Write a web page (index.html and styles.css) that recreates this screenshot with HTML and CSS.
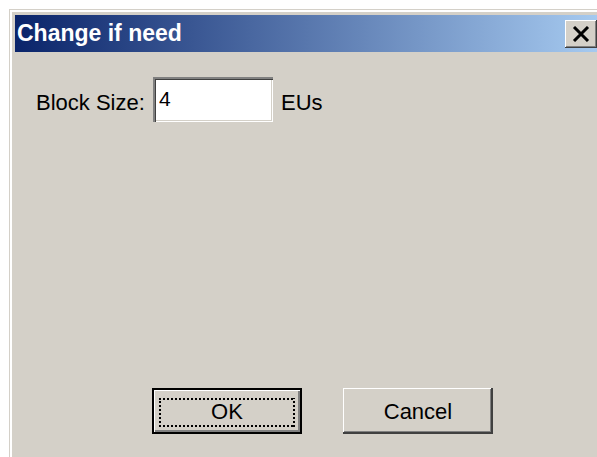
FILE: index.html
```html
<!DOCTYPE html>
<html lang="en">
<head>
<meta charset="utf-8">
<title>Change if need</title>
<link rel="stylesheet" href="styles.css">
</head>
<body>
  <div class="frame">
    <div class="frame-inner">
      <div class="titlebar">
        <span class="title">Change if need</span>
        <button class="close" type="button" aria-label="Close">
          <svg width="18" height="16" viewBox="0 0 18 16"><path d="M2 1 L16 15 M16 1 L2 15" stroke="#000" stroke-width="3" fill="none"/></svg>
        </button>
      </div>
      <div class="client">
        <div class="field-row">
          <label class="label" for="block-size">Block Size:</label>
          <div class="edit"><input id="block-size" class="edit-input" type="text" value="4"></div>
          <span class="unit">EUs</span>
        </div>
        <div class="buttons">
          <button class="btn btn-default" type="button"><span class="focus">OK</span></button>
          <button class="btn" type="button"><span class="nofocus">Cancel</span></button>
        </div>
      </div>
    </div>
  </div>
</body>
</html>
```

FILE: styles.css
```css
html, body {
  margin: 0;
  padding: 0;
  background: #ffffff;
  overflow: hidden;
  width: 597px;
  height: 457px;
}

body {
  padding: 9px 0 0 9px;
  box-sizing: border-box;
  font-family: "Liberation Sans", Arial, sans-serif;
  color: #000;
}

/* window frame: light outer edge, white inner highlight */
.frame {
  width: 600px;
  height: 460px;
  border-top: 1px solid #d4d0c8;
  border-left: 1px solid #d4d0c8;
  background: #d4d0c8;
}

.frame-inner {
  height: 100%;
  border-top: 2px solid #ffffff;
  border-left: 2px solid #ffffff;
  padding: 3px 0 0 3px;
  box-sizing: border-box;
}

.titlebar {
  width: 584px;
  height: 37px;
  display: flex;
  align-items: center;
  background: linear-gradient(90deg, #0a246a 0%, #a6caf0 100%);
}

.title {
  color: #ffffff;
  font-weight: bold;
  font-size: 23px;
  padding-left: 2px;
  letter-spacing: 0;
}

.close {
  margin-left: auto;
  margin-right: 2px;
  width: 32px;
  height: 28px;
  padding: 0;
  border: 0;
  background: #d4d0c8;
  box-shadow: inset -1px -1px #404040, inset 1px 1px #ffffff, inset -2px -2px #808080;
  display: flex;
  align-items: center;
  justify-content: center;
}

.close svg {
  display: block;
  margin-left: -1px;
}

.client {
  padding-left: 21px;
}

.field-row {
  margin-top: 25px;
  height: 45px;
  display: flex;
  align-items: center;
  font-size: 22px;
}

.label {
  width: 117px;
  padding-top: 6px;
}

.edit {
  width: 120px;
  height: 45px;
  box-sizing: border-box;
  background: #ffffff;
  box-shadow: inset 2px 2px #808080, inset 3px 3px #404040, inset -1px -1px #ffffff, inset -2px -2px #d4d0c8;
  display: flex;
}

.edit-input {
  border: 0;
  outline: 0;
  background: transparent;
  width: 100%;
  padding: 0 0 2px 6px;
  font-family: inherit;
  font-size: 21px;
  color: #000;
}

.unit {
  margin-left: 8px;
  padding-top: 6px;
}

.buttons {
  margin-top: 266px;
  padding-left: 116px;
  display: flex;
  gap: 41px;
}

.btn {
  width: 150px;
  height: 46px;
  padding: 0;
  border: 0;
  background: #d4d0c8;
  font-family: inherit;
  font-size: 22px;
  color: #000;
  box-shadow: inset -2px -2px #404040, inset 1px 1px #ffffff, inset -3px -3px #808080;
  display: flex;
  align-items: center;
  justify-content: center;
}

.btn-default {
  box-shadow: inset 0 0 0 2px #000, inset 3px 3px #ffffff, inset -4px -4px #808080;
}

.focus {
  box-sizing: border-box;
  width: 136px;
  height: 29px;
  margin-top: 2px;
  display: flex;
  align-items: center;
  justify-content: center;
  background:
    repeating-linear-gradient(90deg, #000 0 2px, transparent 2px 4px) top / 100% 2px no-repeat,
    repeating-linear-gradient(90deg, #000 0 2px, transparent 2px 4px) bottom / 100% 2px no-repeat,
    repeating-linear-gradient(0deg, #000 0 2px, transparent 2px 4px) left / 2px 100% no-repeat,
    repeating-linear-gradient(0deg, #000 0 2px, transparent 2px 4px) right / 2px 100% no-repeat;
}

.nofocus {
  margin-top: 2px;
}
```
